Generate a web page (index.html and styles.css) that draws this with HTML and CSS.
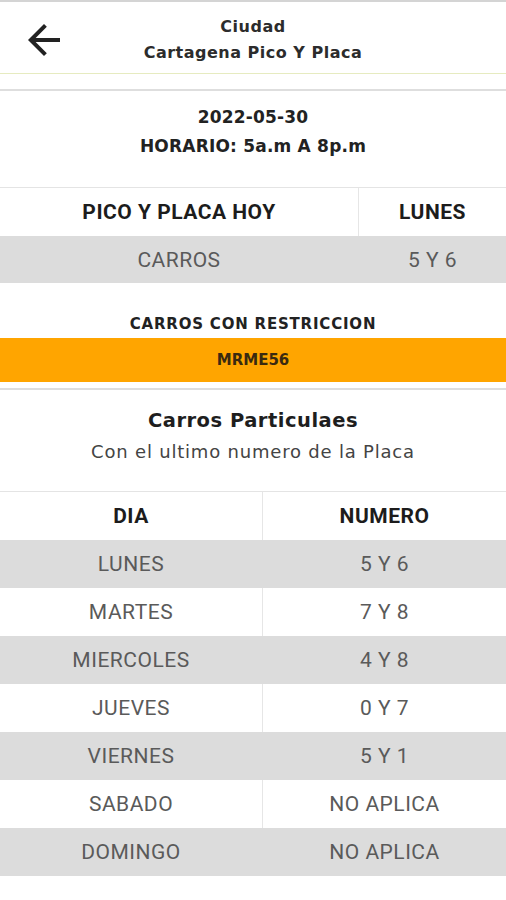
FILE: index.html
```html
<!DOCTYPE html>
<html lang="es">
<head>
<meta charset="utf-8">
<title>Cartagena Pico Y Placa</title>
<link rel="stylesheet" href="styles.css">
</head>
<body>
<header class="topbar">
  <div class="back">
    <svg width="48" height="48" viewBox="0 0 24 24"><path d="M20 11H7.83l5.59-5.59L12 4l-8 8 8 8 1.41-1.41L7.83 13H20v-2z" fill="#222"/></svg>
  </div>
  <div class="title">
    <div class="t1">Ciudad</div>
    <div class="t2">Cartagena Pico Y Placa</div>
  </div>
</header>
<div class="gap"></div>
<section class="info">
  <div class="date">2022-05-30</div>
  <div class="hours">HORARIO: 5a.m A 8p.m</div>
</section>
<div class="table t-today">
  <div class="row head">
    <div class="cell">PICO Y PLACA HOY</div>
    <div class="cell">LUNES</div>
  </div>
  <div class="row shade">
    <div class="cell">CARROS</div>
    <div class="cell">5 Y 6</div>
  </div>
</div>
<section class="restrict">
  <div class="r-title">CARROS CON RESTRICCION</div>
  <div class="plate">MRME56</div>
</section>
<section class="particular">
  <div class="p-title">Carros Particulaes</div>
  <div class="p-sub">Con el ultimo numero de la Placa</div>
</section>
<div class="table t-week">
  <div class="row head">
    <div class="cell">DIA</div>
    <div class="cell">NUMERO</div>
  </div>
  <div class="row shade"><div class="cell">LUNES</div><div class="cell">5 Y 6</div></div>
  <div class="row"><div class="cell">MARTES</div><div class="cell">7 Y 8</div></div>
  <div class="row shade"><div class="cell">MIERCOLES</div><div class="cell">4 Y 8</div></div>
  <div class="row"><div class="cell">JUEVES</div><div class="cell">0 Y 7</div></div>
  <div class="row shade"><div class="cell">VIERNES</div><div class="cell">5 Y 1</div></div>
  <div class="row"><div class="cell">SABADO</div><div class="cell">NO APLICA</div></div>
  <div class="row shade"><div class="cell">DOMINGO</div><div class="cell">NO APLICA</div></div>
</div>
</body>
</html>
```
FILE: styles.css
```css
* { box-sizing: border-box; }
html, body { margin: 0; padding: 0; background: #fff; }
body { font-family: "DejaVu Sans", "Open Sans", sans-serif; color: #222; width: 506px; }

.topbar {
  border-top: 2px solid #d4d4d4;
  border-bottom: 1px solid #e6ebc0;
  height: 74px;
  display: flex;
  align-items: center;
}
.back { width: 48px; height: 48px; margin-left: 20px; margin-top: 4px; display: flex; }
.title {
  flex: 1;
  text-align: center;
  margin-right: 68px;
  font-weight: 700;
  font-size: 16px;
  letter-spacing: 0.5px;
  color: #2c2c2c;
}
.t1 { line-height: 26px; margin-top: 5px; }
.t2 { line-height: 26px; }

.gap { height: 17px; border-bottom: 2px solid #dedede; }

.info {
  height: 96px;
  text-align: center;
  font-weight: 700;
  font-size: 17px;
  letter-spacing: 0.2px;
  color: #222;
  padding-top: 12px;
}
.date { line-height: 28px; }
.hours { line-height: 30px; }

.table { border-top: 1px solid #e4e4e4; font-family: Roboto, "Liberation Sans", sans-serif; }
.row { display: grid; height: 48px; }
.t-today .row { grid-template-columns: 359px 1fr; }
.t-week .row { grid-template-columns: 263px 1fr; }
.t-today .row.shade { height: 47px; }
.cell {
  display: flex; align-items: center; justify-content: center;
  font-size: 21px;
  letter-spacing: 0.5px;
  color: #5a5a5a;
}
.row .cell:first-child { border-right: 1px solid #e6e6e6; }
.row.shade { background: #dcdcdc; }
.row.shade .cell:first-child { border-right-color: transparent; }
.row.head .cell { font-weight: 700; color: #1c1c1c; }

.restrict { padding-top: 28px; border-bottom: 2px solid #dedede; padding-bottom: 6px; }
.r-title {
  text-align: center; font-weight: 700; font-size: 15px; letter-spacing: 0.8px; color: #222;
  line-height: 27px;
}
.plate {
  background: #ffa500;
  height: 44px;
  display: flex; align-items: center; justify-content: center;
  font-weight: 700; font-size: 15px; color: #3a2a10;
}

.particular { height: 101px; text-align: center; padding-top: 16px; }
.p-title { font-weight: 700; font-size: 19.5px; letter-spacing: 0.5px; color: #1e1e1e; line-height: 30px; }
.p-sub { font-size: 18px; letter-spacing: 0.8px; color: #444; line-height: 32px; }
```
